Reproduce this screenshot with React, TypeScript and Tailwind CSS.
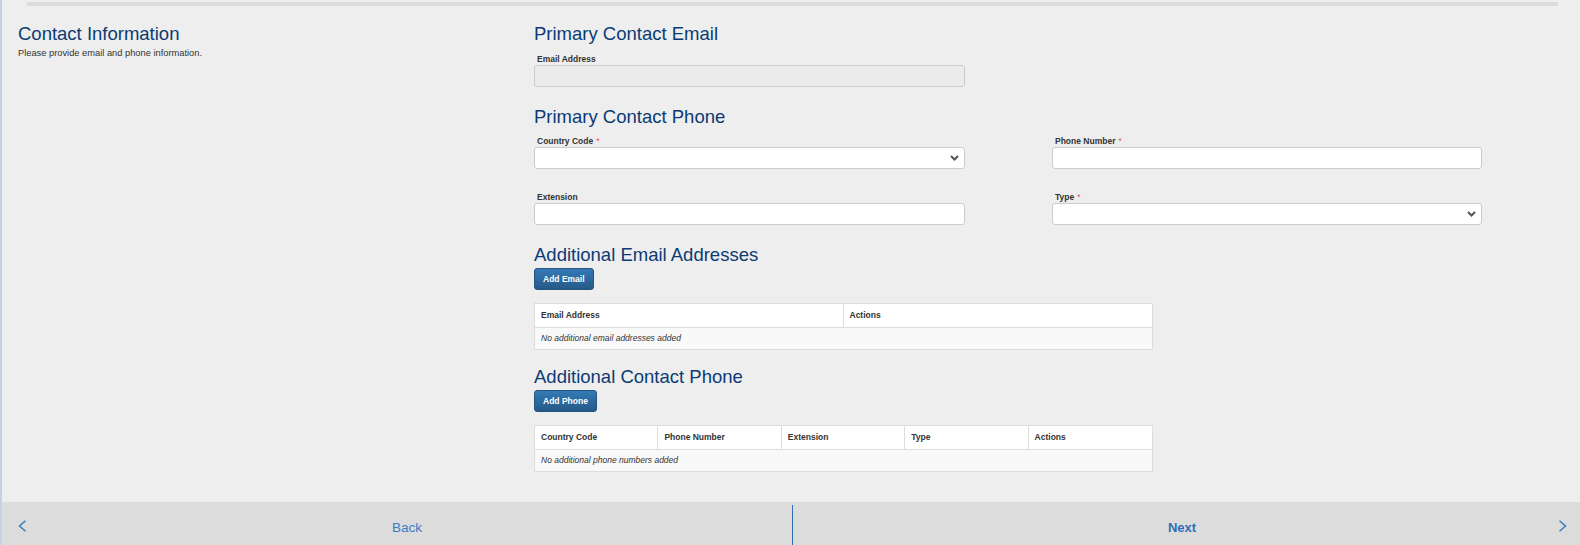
import React from "react";

const Label = ({ children, req }: { children: React.ReactNode; req?: boolean }) => (
  <div className="h-[12px] pl-[3px] text-[8.5px] font-bold leading-[12px] text-[#333333] whitespace-nowrap">
    {children}
    {req && <span className="ml-[3px] font-normal text-[#e2535f]">*</span>}
  </div>
);

const Heading = ({ children, className = "" }: { children: React.ReactNode; className?: string }) => (
  <div className={`h-[20px] text-[18.5px] leading-[20px] text-[#0b3b74] whitespace-nowrap ${className}`}>{children}</div>
);

const Input = ({ disabled }: { disabled?: boolean }) => (
  <div
    className={`h-[22px] w-full rounded-[3px] border border-[#cccccc] ${disabled ? "bg-[#ebebeb]" : "bg-white"}`}
  />
);

const Select = () => (
  <div className="flex h-[22px] w-full items-center justify-end rounded-[3px] border border-[#cccccc] bg-white pr-[5px]">
    <svg width="9" height="6" viewBox="0 0 9 6">
      <polyline points="1,1 4.5,4.5 8,1" fill="none" stroke="#555555" strokeWidth="2" />
    </svg>
  </div>
);

const Button = ({ children }: { children: React.ReactNode }) => (
  <div className="mt-[3px] flex h-[22px] w-fit items-center rounded-[3px] border border-[#245580] bg-gradient-to-b from-[#337ab7] to-[#265a88] px-[8px] text-[8.5px] font-bold text-white">
    {children}
  </div>
);

const Table = ({ cols, empty, colClass }: { cols: string[]; empty: string; colClass: string }) => (
  <div className="mt-[13px] w-[619px] border border-[#dddddd] text-[8.5px] text-[#333333]">
    <div className={`grid h-[23px] bg-white ${colClass}`}>
      {cols.map((c, i) => (
        <div
          key={c + i}
          className={`flex items-center px-[6px] font-bold ${i < cols.length - 1 ? "border-r border-[#dddddd]" : ""}`}
        >
          {c}
        </div>
      ))}
    </div>
    <div className="flex h-[22px] items-center border-t border-[#dddddd] bg-[#f9f9f9] px-[6px] italic">{empty}</div>
  </div>
);

export default function App() {
  return (
    <div className="flex h-[545px] w-[1580px] flex-col overflow-hidden border-l-2 border-[#c6d1e4] bg-[#eeeeee] font-['Liberation_Sans',Arial,sans-serif]">
      <div className="flex-1">
        <div className="ml-[25px] mr-[22px] mt-[2px] h-[4px] bg-[#dcdcdc]" />
        <div className="flex">
          <div className="w-[532px] pl-[16px]">
            <Heading className="mt-[18px]">Contact Information</Heading>
            <div className="mt-[3px] text-[9.3px] leading-[12px] text-[#333333]">
              Please provide email and phone information.
            </div>
          </div>
          <div className="w-[948px]">
            <Heading className="mt-[18px]">Primary Contact Email</Heading>
            <div className="mt-[9px] w-[431px]">
              <Label>Email Address</Label>
              <Input disabled />
            </div>
            <Heading className="mt-[20px]">Primary Contact Phone</Heading>
            <div className="grid grid-cols-[431px_430px] gap-x-[87px]">
              <div className="mt-[8px]">
                <Label req>Country Code</Label>
                <Select />
              </div>
              <div className="mt-[8px]">
                <Label req>Phone Number</Label>
                <Input />
              </div>
              <div className="mt-[22px]">
                <Label>Extension</Label>
                <Input />
              </div>
              <div className="mt-[22px]">
                <Label req>Type</Label>
                <Select />
              </div>
            </div>
            <Heading className="mt-[20px]">Additional Email Addresses</Heading>
            <Button>Add Email</Button>
            <Table cols={["Email Address", "Actions"]} empty="No additional email addresses added" colClass="grid-cols-2" />
            <Heading className="mt-[17px]">Additional Contact Phone</Heading>
            <Button>Add Phone</Button>
            <Table
              cols={["Country Code", "Phone Number", "Extension", "Type", "Actions"]}
              empty="No additional phone numbers added"
              colClass="grid-cols-5"
            />
          </div>
        </div>
      </div>
      <div className="flex h-[43px] bg-[#dcdcdc]">
        <div className="relative flex w-[790px] items-center justify-center pl-[20px] pt-[9px]">
          <svg className="absolute left-[16px] top-[18px]" width="9" height="12" viewBox="0 0 9 12">
            <polyline points="7.5,0.8 1.5,6 7.5,11.2" fill="none" stroke="#3a7bc4" strokeWidth="1.5" />
          </svg>
          <span className="text-[13.5px] text-[#3a7bc4]">Back</span>
        </div>
        <div className="mt-[3px] w-[1px] bg-[#2f6fb5]" />
        <div className="relative flex flex-1 items-center justify-center pr-[9px] pt-[9px]">
          <span className="text-[13px] font-bold text-[#2f6fb5]">Next</span>
          <svg className="absolute right-[13px] top-[18px]" width="9" height="12" viewBox="0 0 9 12">
            <polyline points="1.5,0.8 7.5,6 1.5,11.2" fill="none" stroke="#3a7bc4" strokeWidth="1.5" />
          </svg>
        </div>
      </div>
    </div>
  );
}
